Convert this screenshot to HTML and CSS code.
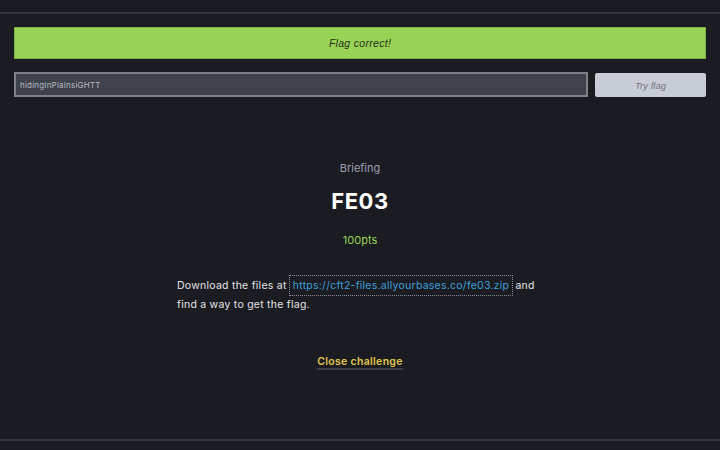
FILE: index.html
```html
<!DOCTYPE html>
<html>
<head>
<meta charset="utf-8">
<link rel="stylesheet" href="styles.css">
</head>
<body>
<div class="topbar"></div>
<main class="panel">
  <div class="alert">Flag correct!</div>
  <form class="flag-form">
    <input class="flag-input" type="text" value="hidingInPlaInsiGHTT">
    <button class="flag-btn" type="button">Try flag</button>
  </form>
  <section class="challenge">
    <div class="category">Briefing</div>
    <h1 class="title">FE03</h1>
    <div class="points">100pts</div>
    <p class="desc">Download the files at <a class="link" href="#">https://cft2-files.allyourbases.co/fe03.zip</a> and find a way to get the flag.</p>
    <a class="close" href="#">Close challenge</a>
  </section>
</main>
<div class="bottombar"></div>
</body>
</html>
```
FILE: styles.css
```css
html, body {
  margin: 0;
  padding: 0;
  background: #1b1c21;
  height: 450px;
  overflow: hidden;
  font-family: "Inter", "Noto Sans", sans-serif;
}
.topbar {
  height: 12px;
  border-bottom: 2px solid #34363e;
}
.panel {
  padding: 13px 14px 0;
  height: 425px;
  box-sizing: border-box;
  display: flex;
  flex-direction: column;
}
.alert {
  height: 32px;
  background: #98d356;
  border: 1px solid #7fae4a;
  box-sizing: border-box;
  display: flex;
  align-items: center;
  justify-content: center;
  font-family: "Liberation Sans", sans-serif;
  font-style: italic;
  font-size: 10.5px;
  color: #27301c;
  letter-spacing: 0.3px;
}
.flag-form {
  margin-top: 13px;
  display: flex;
  gap: 7px;
}
.flag-input {
  flex: 1;
  height: 25px;
  box-sizing: border-box;
  background: #3f424b;
  border: 2px solid #7d808b;
  color: #b6b9c2;
  font-family: "Inter", sans-serif;
  font-size: 8px;
  letter-spacing: 0.2px;
  padding: 0 4px;
  outline: none;
  margin: 0;
}
.flag-btn {
  width: 111px;
  height: 24px;
  margin-top: 1px;
  background: #c8ccd6;
  border: 0;
  border-radius: 2px;
  font-family: "Liberation Sans", sans-serif;
  font-style: italic;
  font-size: 9.5px;
  color: #73767f;
  padding: 0;
}
.challenge {
  display: flex;
  flex-direction: column;
  align-items: center;
  margin-top: 64px;
}
.category {
  font-size: 11px;
  color: #9b9eb0;
  line-height: 14px;
}
.title {
  margin: 14px 0 0;
  font-size: 22px;
  font-weight: 700;
  color: #ffffff;
  line-height: 24px;
  letter-spacing: 0.5px;
}
.points {
  margin-top: 20px;
  font-size: 11px;
  color: #98d356;
  line-height: 14px;
}
.desc {
  margin: 29px 0 0;
  width: 366px;
  font-size: 10.5px;
  line-height: 19px;
  color: #e3e3e6;
  letter-spacing: 0.25px;
}
.link {
  color: #3d9fdc;
  text-decoration: none;
  outline: 1px dotted #8a8d96;
  outline-offset: 3px;
  margin: 0 3px;
}
.close {
  margin-top: 41px;
  font-size: 10.5px;
  font-weight: 600;
  color: #e1c650;
  text-decoration: none;
  border-bottom: 2px solid #3a3d47;
  line-height: 13px;
  letter-spacing: 0.3px;
}
.bottombar {
  border-top: 2px solid #34363e;
}
```
